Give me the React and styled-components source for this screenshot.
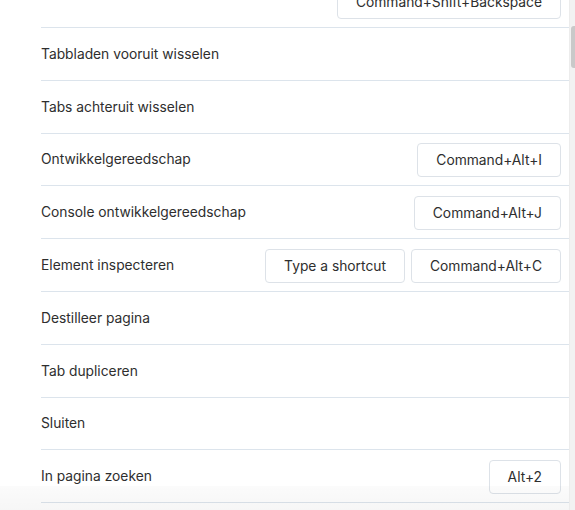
import styled, { createGlobalStyle } from 'styled-components';

const GlobalStyle = createGlobalStyle`
html, body {
  margin: 0;
  padding: 0;
  background: #ffffff;
  overflow: hidden;
}
body {
  font-family: Inter, "Liberation Sans", Arial, sans-serif;
  color: #2e2e2e;
  -webkit-font-smoothing: antialiased;
}
`;

const Page = styled.div`
position: relative;
display: flex;
width: 575px;
height: 510px;
overflow: hidden;
`;

const List = styled.div`
flex: 1;
padding-left: 41px;
margin-top: -24.8px;
`;

const Row = styled.div`
box-sizing: border-box;
height: 52.8px;
display: flex;
align-items: center;
justify-content: space-between;
padding-right: 8px;
border-bottom: 1px solid #dce4ec;
`;

const Label = styled.span`
font-size: 13.8px;
color: #2e2e2e;
`;

const Keys = styled.div`
display: flex;
gap: 6px;
`;

const KeyButton = styled.div`
box-sizing: border-box;
height: 34px;
margin-top: 2px;
display: flex;
align-items: center;
padding: 0 18px;
border: 1px solid #dde2e8;
border-radius: 4px;
background: #ffffff;
font-size: 13.8px;
color: #2e2e2e;
white-space: nowrap;
`;

const Track = styled.div`
width: 5px;
flex-shrink: 0;
background: #f2f2f2;
border-left: 1px solid #ececec;
`;

const Thumb = styled.div`
width: 4px;
height: 42px;
margin-top: 26px;
margin-left: 1px;
border-radius: 3px 0 0 3px;
background: #c9c9c9;
`;

const BottomFade = styled.div`
position: absolute;
left: 0;
right: 6px;
bottom: 0;
height: 24px;
pointer-events: none;
background: linear-gradient(rgba(0, 0, 0, 0.015), rgba(0, 0, 0, 0.035));
`;

const shortcuts = [
  { label: '', keys: ['Command+Shift+Backspace'] },
  { label: 'Tabbladen vooruit wisselen', keys: [] },
  { label: 'Tabs achteruit wisselen', keys: [] },
  { label: 'Ontwikkelgereedschap', keys: ['Command+Alt+I'] },
  { label: 'Console ontwikkelgereedschap', keys: ['Command+Alt+J'] },
  { label: 'Element inspecteren', keys: ['Type a shortcut', 'Command+Alt+C'] },
  { label: 'Destilleer pagina', keys: [] },
  { label: 'Tab dupliceren', keys: [] },
  { label: 'Sluiten', keys: [] },
  { label: 'In pagina zoeken', keys: ['Alt+2'] },
];

export default function App() {
  return (
    <Page>
      <GlobalStyle />
      <List>
        {shortcuts.map((s, i) => (
          <Row key={i}>
            <Label>{s.label}</Label>
            <Keys>
              {s.keys.map(k => (
                <KeyButton key={k}>{k}</KeyButton>
              ))}
            </Keys>
          </Row>
        ))}
      </List>
      <Track>
        <Thumb />
      </Track>
      <BottomFade />
    </Page>
  );
}
